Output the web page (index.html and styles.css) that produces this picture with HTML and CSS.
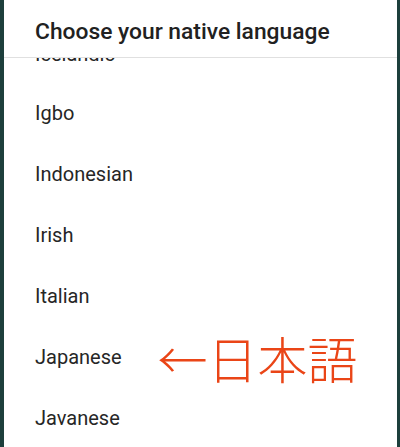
FILE: index.html
```html
<!DOCTYPE html>
<html>
<head>
    <title>Choose your native language</title>
    <meta charset="UTF-8">
    <link rel="stylesheet" href="styles.css">
</head>
<body>
    <div class="dialog">
        <div class="header">
            <h1>Choose your native language</h1>
        </div>
        <div class="list">
            <div class="item first">Icelandic</div>
            <div class="item">Igbo</div>
            <div class="item">Indonesian</div>
            <div class="item">Irish</div>
            <div class="item">Italian</div>
            <div class="item">
                Japanese
                <span class="note">←日本語</span>
            </div>
            <div class="item">Javanese</div>
        </div>
    </div>
</body>
</html>
```

FILE: styles.css
```css
html, body {
    height: 100%;
}
body {
    margin: 0;
    background-color: #1d3f3c;
    font-family: Roboto, Arial, sans-serif;
}
.dialog {
    margin: 0 3px 0 4px;
    height: 100%;
    background-color: white;
    display: flex;
    flex-direction: column;
    overflow: hidden;
}
.header {
    height: 57px;
    border-bottom: 1px solid #e0e0e0;
    background-color: white;
    position: relative;
    z-index: 1;
    flex-shrink: 0;
}
.header h1 {
    margin: 0;
    padding: 17px 0 0 31px;
    font-size: 22.8px;
    font-weight: 500;
    color: #212121;
    line-height: 30px;
}
.list {
    flex: 1;
    overflow: hidden;
}
.item {
    height: 61px;
    box-sizing: border-box;
    display: flex;
    align-items: center;
    padding-left: 31px;
    font-size: 20px;
    color: #262626;
}
/* scrolled item, only its lower edge shows under the header */
.item.first {
    margin-top: -37px;
    padding-top: 4px;
}
.note {
    margin-left: 36px;
    font-family: "Noto Sans CJK JP", serif;
    font-weight: 300;
    font-size: 50px;
    color: #ea4517;
    line-height: 1;
}
```
